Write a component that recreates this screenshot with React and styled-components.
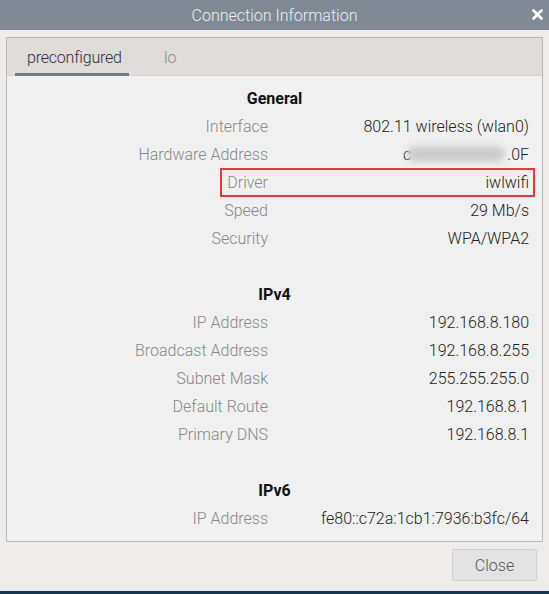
import React from "react";
import styled, { createGlobalStyle } from "styled-components";

const Global = createGlobalStyle`
  html, body { margin: 0; padding: 0; background: #1d3650; }
  body { font-family: Roboto, "Liberation Sans", sans-serif; }
`;

const Window = styled.div`
  width: 549px;
  height: 591px;
  background: #edecea;
  display: flex;
  flex-direction: column;
`;

const TitleBar = styled.div`
  height: 30px;
  background: #808a95;
  display: flex;
  align-items: center;
  justify-content: center;
  position: relative;
  color: #eceef0;
  font-size: 16px;
  font-weight: 300;
`;

const CloseX = styled.span`
  position: absolute;
  right: 6px;
  top: 6px;
  width: 12px;
  height: 16px;
  display: flex;
  align-items: center;
  justify-content: center;
`;

const Body = styled.div`
  flex: 1;
  display: flex;
  flex-direction: column;
  padding: 7px 6px 0 6px;
`;

const Frame = styled.div`
  border: 1px solid #b9b9b9;
  background: #f0f0f0;
  display: flex;
  flex-direction: column;
`;

const TabBar = styled.div`
  height: 37px;
  background: #dfdcd9;
  border-bottom: 1px solid #d2d0ce;
  display: flex;
  align-items: stretch;
  padding-left: 8px;
`;

const Tab = styled.div`
  box-sizing: border-box;
  width: ${(p) => (p.$active ? "114px" : "auto")};
  padding: 3px 12px 0 12px;
  display: flex;
  align-items: center;
  white-space: nowrap;
  font-size: 16px;
  font-weight: 300;
  letter-spacing: -0.2px;
  color: ${(p) => (p.$active ? "#333" : "#8a8a8a")};
  border-bottom: 3px solid ${(p) => (p.$active ? "#737a84" : "transparent")};
  margin-bottom: -1px;
  margin-right: ${(p) => (p.$active ? "23px" : "0")};
`;

const Content = styled.div`
  padding: 8px 0 9px 0;
  display: flex;
  flex-direction: column;
`;

const Section = styled.div`
  display: flex;
  flex-direction: column;
  & + & { margin-top: 28px; }
`;

const Header = styled.div`
  height: 28px;
  display: flex;
  align-items: center;
  justify-content: center;
  font-size: 16px;
  font-weight: 700;
  color: #111;
`;

const Row = styled.div`
  height: 28px;
  display: flex;
  align-items: center;
  position: relative;
  font-size: 16px;
  font-weight: 300;
  &::after {
    content: "";
    display: ${(p) => (p.$highlight ? "block" : "none")};
    position: absolute;
    left: 213px;
    right: 7px;
    top: 0;
    bottom: -1px;
    border: 2px solid #e23b3f;
    box-sizing: border-box;
  }
`;

const Label = styled.div`
  width: 261px;
  text-align: right;
  color: #888;
`;

const Value = styled.div`
  flex: 1;
  text-align: right;
  padding-right: 13px;
  color: #222;
  display: flex;
  justify-content: flex-end;
  align-items: center;
`;

const Blur = styled.span`
  display: inline-block;
  width: 98px;
  height: 16px;
  background: #cdcdcd;
  border-radius: 8px;
  filter: blur(3px);
  margin: 0 2px 0 -4px;
`;

const Footer = styled.div`
  display: flex;
  justify-content: flex-end;
  padding: 7px 6px 0 0;
`;

const Button = styled.button`
  width: 85px;
  height: 32px;
  background: #e3e3e3;
  border: 1px solid #cfcfcf;
  border-radius: 2px;
  font-family: inherit;
  font-size: 16px;
  font-weight: 300;
  color: #555;
`;

const sections = [
  {
    title: "General",
    rows: [
      ["Interface", "802.11 wireless (wlan0)"],
      ["Hardware Address", "HW"],
      ["Driver", "iwlwifi", true],
      ["Speed", "29 Mb/s"],
      ["Security", "WPA/WPA2"],
    ],
  },
  {
    title: "IPv4",
    rows: [
      ["IP Address", "192.168.8.180"],
      ["Broadcast Address", "192.168.8.255"],
      ["Subnet Mask", "255.255.255.0"],
      ["Default Route", "192.168.8.1"],
      ["Primary DNS", "192.168.8.1"],
    ],
  },
  {
    title: "IPv6",
    rows: [["IP Address", "fe80::c72a:1cb1:7936:b3fc/64"]],
  },
];

export default function App() {
  return (
    <>
      <Global />
      <Window>
        <TitleBar>
          Connection Information
          <CloseX>
            <svg width="11" height="11" viewBox="0 0 11 11">
              <path d="M1.5 1.5 L9.5 9.5 M9.5 1.5 L1.5 9.5" stroke="#fff" strokeWidth="2.6" strokeLinecap="round" />
            </svg>
          </CloseX>
        </TitleBar>
        <Body>
          <Frame>
            <TabBar>
              <Tab $active>preconfigured</Tab>
              <Tab>lo</Tab>
            </TabBar>
            <Content>
              {sections.map((s) => (
                <Section key={s.title}>
                  <Header>{s.title}</Header>
                  {s.rows.map(([l, v, h]) => (
                    <Row key={l} $highlight={h}>
                      <Label>{l}</Label>
                      <Value>
                        {v === "HW" ? (
                          <>
                            <span>c</span>
                            <Blur />
                            <span>.0F</span>
                          </>
                        ) : (
                          v
                        )}
                      </Value>
                    </Row>
                  ))}
                </Section>
              ))}
            </Content>
          </Frame>
          <Footer>
            <Button>Close</Button>
          </Footer>
        </Body>
      </Window>
    </>
  );
}
